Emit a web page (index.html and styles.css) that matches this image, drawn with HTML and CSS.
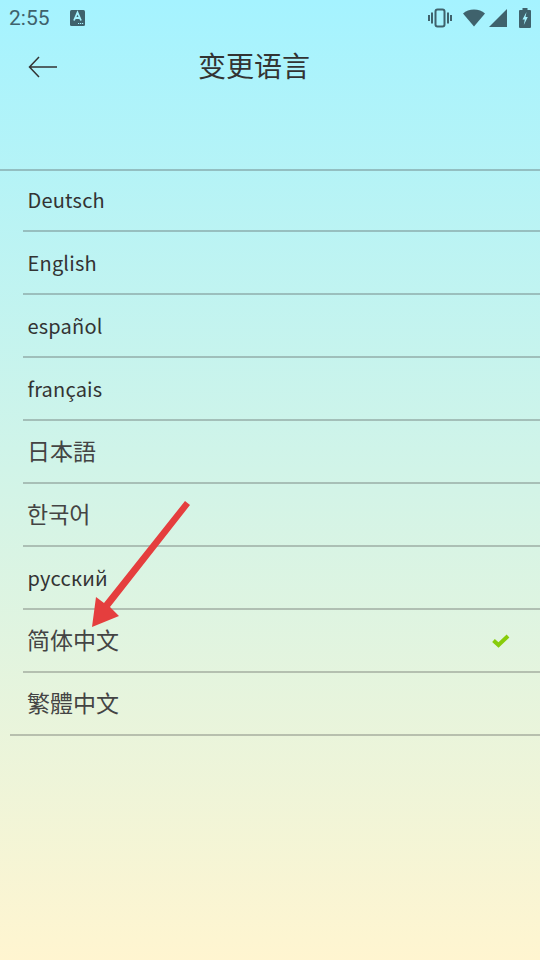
FILE: index.html
```html
<!DOCTYPE html>
<html lang="zh">
<head>
    <meta charset="UTF-8">
    <meta name="viewport" content="width=device-width, initial-scale=1.0">
    <title>变更语言</title>
    <link rel="stylesheet" href="styles.css">
</head>
<body>
    <div class="screen">
        <div class="status">
            <div class="status-left">
                <span class="time">2:55</span>
                <svg class="note" width="15" height="16" viewBox="0 0 15 16">
                    <rect width="15" height="16" rx="1.5" fill="#3f626c"/>
                    <path d="M4 10.500 7.500 2.500 11 10.500M5.200 8h4.600" fill="none" stroke="#a5f3ff" stroke-width="1.800"/>
                    <path d="M8 13.500h1.200M10 13.500h1.200M12 13.500h1.200" stroke="#a5f3ff" stroke-width="1"/>
                </svg>
            </div>
            <div class="status-right">
                <svg class="vib" width="24" height="20" viewBox="0 0 24 20">
                    <rect x="7.500" y="1.500" width="9" height="17" rx="2" fill="none" stroke="#3f626c" stroke-width="2"/>
                    <path d="M4 4.500v11M20 4.500v11M1 7v6M23 7v6" stroke="#3f626c" stroke-width="2"/>
                </svg>
                <svg class="wifi" width="22" height="18" viewBox="0 0 23 18" preserveAspectRatio="none">
                    <path d="M0 4.500C3 2 7 0.500 11.500 0.500S20 2 23 4.500L11.500 17.500Z" fill="#3f626c"/>
                </svg>
                <svg class="sig" width="19" height="18" viewBox="0 0 19 18">
                    <path d="M0 18 18 0V18Z" fill="#3f626c"/>
                </svg>
                <svg class="batt" width="12" height="20" viewBox="0 0 12 20">
                    <path d="M3.500 0h5v2H11a1 1 0 0 1 1 1v16a1 1 0 0 1-1 1H1a1 1 0 0 1-1-1V3a1 1 0 0 1 1-1h2.500Z" fill="#3f626c"/>
                    <path d="M7.500 4 3.500 11.500H5.800L4.800 17 8.800 9H6.500Z" fill="#a5f3ff"/>
                </svg>
            </div>
        </div>

        <div class="header">
            <svg class="back" width="32" height="24" viewBox="0 0 32 24">
                <path d="M29 12H1.500M11 2 1.500 12 11 22" fill="none" stroke="#333" stroke-width="1.500"/>
            </svg>
            <h1 class="title">变更语言</h1>
        </div>

        <ul class="langs">
            <li class="lang">Deutsch</li>
            <li class="lang">English</li>
            <li class="lang">español</li>
            <li class="lang">français</li>
            <li class="lang cjk" lang="ja">日本語</li>
            <li class="lang cjk" lang="ko">한국어</li>
            <li class="lang">русский</li>
            <li class="lang cjk">简体中文
                <svg class="check" width="18" height="14" viewBox="0 0 18 14">
                    <path d="M1.500 6.500 6.500 11 16 2" fill="none" stroke="#88cc0a" stroke-width="4"/>
                </svg>
            </li>
            <li class="lang cjk last" lang="zh-TW">繁體中文</li>
        </ul>

        <svg class="arrow" width="540" height="960" viewBox="0 0 540 960">
            <path d="M185 501 190 505 110 607 119 616 92 627 96 597 104 603Z" fill="#e53e3e"/>
        </svg>
    </div>
</body>
</html>
```

FILE: styles.css
```css
*{
    box-sizing:border-box;
}
html,body{
    margin:0;
    padding:0;
}
.screen{
    position:relative;
    width:540px;
    height:960px;
    overflow:hidden;
    background:linear-gradient(#a5f3ff 0%,#fff5d0 100%);
    font-family:"Noto Sans CJK SC",sans-serif;
    color:#333;
}
.status{
    height:36px;
    display:flex;
    justify-content:space-between;
    align-items:center;
    padding:0 9px;
}
.status-left{
    display:flex;
    align-items:center;
    gap:20px;
}
.time{
    font-family:Roboto,sans-serif;
    font-size:21px;
    color:#3f626c;
}
.status-right{
    display:flex;
    align-items:center;
}
.vib{
    margin-right:11px;
}
.sig{
    margin-left:4px;
}
.batt{
    margin-left:11px;
}
.header{
    position:relative;
    height:133px;
    padding:19px 0 0 28px;
}
.back{
    display:block;
}
.title{
    position:absolute;
    left:0;
    right:32px;
    top:9px;
    margin:0;
    text-align:center;
    font-size:28px;
    line-height:40px;
    font-weight:400;
}
.langs{
    list-style:none;
    margin:0;
    padding:0;
    border-top:2px solid rgba(70,70,70,.3);
}
.lang{
    display:flex;
    justify-content:space-between;
    align-items:center;
    height:63px;
    margin-left:23px;
    padding:0 30px 0 4.5px;
    font-size:20px;
    letter-spacing:0.2px;
    border-bottom:2px solid rgba(70,70,70,.3);
}
.lang:first-child{
    height:61px;
    padding-bottom:2px;
}
.cjk{
    font-size:23px;
    letter-spacing:0;
    color:#444;
    padding-left:4px;
    padding-bottom:4px;
}
.last{
    margin-left:10px;
    padding-left:17px;
}
.check{
    display:block;
    margin-top:4px;
}
.arrow{
    position:absolute;
    left:0;
    top:0;
}
```
